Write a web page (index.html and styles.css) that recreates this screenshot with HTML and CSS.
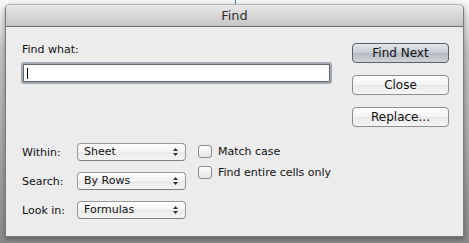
FILE: index.html
```html
<!DOCTYPE html>
<html lang="en">
<head>
    <meta charset="UTF-8">
    <title>Find</title>
    <link rel="stylesheet" href="styles.css">
</head>
<body>

<div class="tick"></div>

<div class="window">
    <div class="titlebar">Find</div>

    <div class="content">
        <div class="left">
            <div class="find-label">Find what:</div>
            <div class="search-box"><span class="caret"></span></div>

            <div class="options">
                <div class="selects">
                    <span class="opt-label">Within:</span>
                    <div class="select">Sheet <svg class="arrows" width="5" height="8" viewBox="0 0 5 8"><path d="M0 3 L2.5 0 L5 3 Z M0 5 L2.5 8 L5 5 Z" fill="#333"/></svg></div>

                    <span class="opt-label">Search:</span>
                    <div class="select">By Rows <svg class="arrows" width="5" height="8" viewBox="0 0 5 8"><path d="M0 3 L2.5 0 L5 3 Z M0 5 L2.5 8 L5 5 Z" fill="#333"/></svg></div>

                    <span class="opt-label">Look in:</span>
                    <div class="select">Formulas <svg class="arrows" width="5" height="8" viewBox="0 0 5 8"><path d="M0 3 L2.5 0 L5 3 Z M0 5 L2.5 8 L5 5 Z" fill="#333"/></svg></div>
                </div>

                <div class="checks">
                    <label class="check"><span class="box"></span>Match case</label>
                    <label class="check"><span class="box"></span>Find entire cells only</label>
                </div>
            </div>
        </div>

        <div class="actions">
            <button class="button default">Find Next</button>
            <button class="button">Close</button>
            <button class="button">Replace...</button>
        </div>
    </div>
</div>

</body>
</html>
```

FILE: styles.css
```css
body {
    margin: 0;
    width: 469px;
    height: 243px;
    overflow: hidden;
    font-family: 'DejaVu Sans', sans-serif;
    font-size: 11px;
    color: #111;
    background: linear-gradient(#f7f7f7 0, #f3f3f3 6px, #c4c4c4 50px, #8a8a8a 100%);
}

.tick {
    width: 1px;
    height: 4px;
    margin-left: 235px;
    background-color: #3d6fd0;
}

.window {
    margin-left: 5px;
    width: 459px;
    height: 233px;
    box-sizing: border-box;
    border: 1px solid #7c7c7c;
    border-top-color: #b4b4b4;
    border-radius: 5px 5px 0 0;
    background-color: #ececec;
    box-shadow: 0 2px 5px rgba(0, 0, 0, 0.35);
}

.titlebar {
    height: 21px;
    line-height: 21px;
    border-bottom: 1px solid #6c6c6c;
    border-radius: 4px 4px 0 0;
    background: linear-gradient(#e8e8e8, #c6c6c6);
    text-align: center;
    font-size: 13px;
    color: #333;
}

.content {
    display: flex;
    padding: 13px 0 0 15px;
}

.left {
    width: 311px;
}

.find-label {
    line-height: 14px;
    padding-left: 1px;
    margin: 3px 0 7px;
}

.search-box {
    margin: 0 2px;
    height: 16px;
    border: 1px solid #5e6670;
    background-color: #fff;
    box-shadow: 0 0 0 2px rgba(125, 135, 148, 0.65);
    border-radius: 1px;
}

.caret {
    display: block;
    width: 1px;
    height: 11px;
    margin: 3px 0 0 3px;
    background-color: #000;
}

.options {
    display: flex;
    margin-top: 61px;
    padding-left: 1px;
}

.selects {
    display: grid;
    grid-template-columns: 55px 109px;
    grid-auto-rows: 18px;
    row-gap: 11px;
    align-items: center;
}

.select {
    height: 18px;
    box-sizing: border-box;
    border: 1px solid #9a9a9a;
    border-bottom-color: #7e7e7e;
    border-radius: 4px;
    background: linear-gradient(#ffffff, #f2f2f2 50%, #e9e9e9 51%, #f4f4f4);
    display: flex;
    align-items: center;
    justify-content: space-between;
    padding: 0 7px 0 6px;
    line-height: 16px;
}

.checks {
    display: flex;
    flex-direction: column;
    gap: 7px;
    margin-left: 12px;
    margin-top: 1px;
}

.check {
    display: flex;
    align-items: center;
    height: 14px;
}

.box {
    width: 14px;
    height: 13px;
    box-sizing: border-box;
    border: 1px solid #8c8c8c;
    border-radius: 3px;
    background: linear-gradient(#ffffff, #e4e4e4);
    margin-right: 6px;
}

.actions {
    display: flex;
    flex-direction: column;
    gap: 12px;
    margin: 3px 0 0 20px;
}

.button {
    width: 97px;
    height: 20px;
    padding: 0;
    border: 1px solid #8e8e8e;
    border-radius: 4px;
    background: linear-gradient(#ffffff, #f3f3f3 50%, #e8e8e8 51%, #f6f6f6);
    font-family: 'DejaVu Sans', sans-serif;
    font-size: 12px;
    color: #111;
}

.default {
    border-color: #5c6168;
    background: linear-gradient(#e4e7eb, #c5cbd2 50%, #b3bac3 51%, #cfd4da);
}
```
